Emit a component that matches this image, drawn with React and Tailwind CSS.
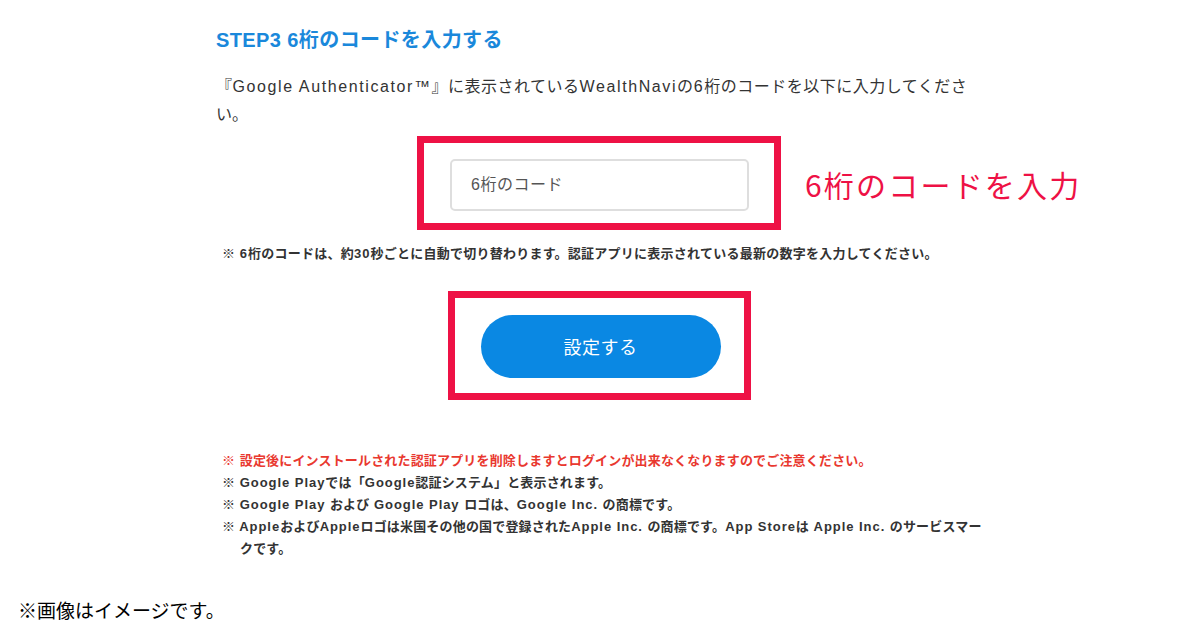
function T({ text, lat, jpTrack }) {
  const parts = text.split(/([\x20-\x7E™]+)/);
  return (
    <>
      {parts.map((p, i) =>
        p === '' ? null : /[\x20-\x7E™]/.test(p[0]) ? (
          <span key={i} style={{ letterSpacing: lat }}>{p}</span>
        ) : (
          <span key={i} style={{ letterSpacing: jpTrack }}>{p}</span>
        )
      )}
    </>
  );
}

export default function App() {
  const jp = { fontFamily: '"Noto Sans CJK JP", "Noto Sans", sans-serif' };
  const mix = { fontFamily: '"Liberation Sans", "Noto Sans CJK JP", sans-serif' };
  const nL = '0.95px';
  const nJ = '0.17px';
  return (
    <div className="w-[1200px] h-[630px] bg-white relative overflow-hidden" style={jp}>
      <div className="ml-[216px] w-[766px] pt-[26px]">
        <h2 className="text-[20px] leading-[28px] font-bold text-[#1a88db] tracking-[0.4px]" style={mix}>STEP3 6桁のコードを入力する</h2>
        <p className="mt-[19px] text-[16px] leading-[28px] text-[#333] whitespace-nowrap" style={mix}>
          <T text="『Google Authenticator™』に表示されているWealthNaviの6桁のコードを以下に入力してくださ" lat="1.6px" jpTrack="0.5px" />
          <br />い。
        </p>

        <div className="flex justify-center mt-[7px]">
          <div className="relative border-[7px] border-[#ee1145] w-[364px] h-[94px] pl-[26px] pt-[16px]">
            <div className="w-[299px] h-[52px] border-2 border-[#dedede] rounded-[5px] flex items-center pl-[19px] text-[16px] text-[#555] tracking-[0.5px]" style={mix}>
              6桁のコード
            </div>
            <div className="absolute left-[381px] top-[21px] whitespace-nowrap text-[30px] leading-[40px] text-[#ee1145] tracking-[2.2px]">
              6桁のコードを入力
            </div>
          </div>
        </div>

        <p className="mt-[14px] ml-[6px] text-[13px] leading-[20px] font-bold text-[#333] whitespace-nowrap" style={mix}>
          <T text="※ 6桁のコードは、約30秒ごとに自動で切り替わります。認証アプリに表示されている最新の数字を入力してください。" lat={nL} jpTrack="0.25px" />
        </p>

        <div className="flex justify-center mt-[27px]">
          <div className="border-[7px] border-[#ee1145] w-[303px] h-[109px] pl-[26px] pt-[17px]">
            <div className="w-[240px] h-[63px] rounded-full bg-[#0a88e3] flex items-center justify-center text-white text-[18px] tracking-[0.5px]">
              設定する
            </div>
          </div>
        </div>

        <div className="mt-[50px] ml-[6px] text-[13px] leading-[22px] font-bold text-[#333] whitespace-nowrap" style={mix}>
          <p className="text-[#e9382f]"><T text="※ 設定後にインストールされた認証アプリを削除しますとログインが出来なくなりますのでご注意ください。" lat={nL} jpTrack={nJ} /></p>
          <p><T text="※ Google Playでは「Google認証システム」と表示されます。" lat={nL} jpTrack={nJ} /></p>
          <p><T text="※ Google Play および Google Play ロゴは、Google Inc. の商標です。" lat={nL} jpTrack={nJ} /></p>
          <p>
            <T text="※ AppleおよびAppleロゴは米国その他の国で登録されたApple Inc. の商標です。App Storeは Apple Inc. のサービスマー" lat={nL} jpTrack={nJ} />
            <br />
            <span className="pl-[18px]"><T text="クです。" lat={nL} jpTrack={nJ} /></span>
          </p>
        </div>
      </div>
      <div className="absolute left-[18px] top-[596px] text-[19px] leading-[28px] text-black">※画像はイメージです。</div>
    </div>
  );
}
